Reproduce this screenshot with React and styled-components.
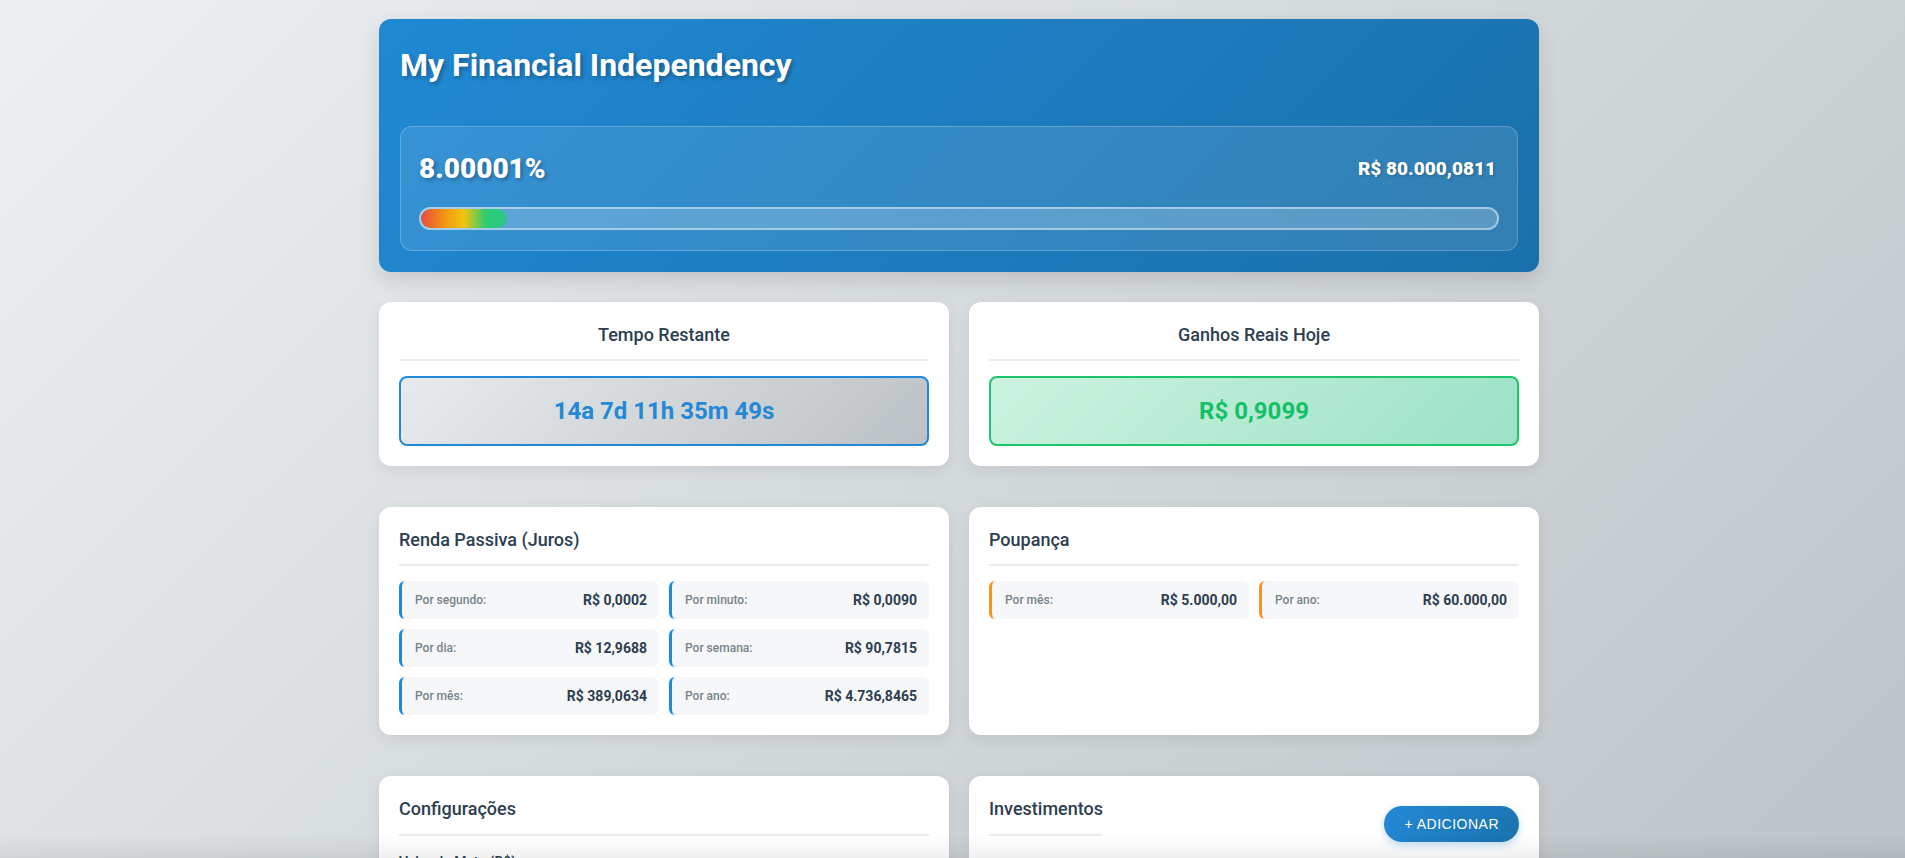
import React from "react";
import styled, { createGlobalStyle } from "styled-components";

const GlobalStyle = createGlobalStyle`
  * {
    box-sizing: border-box;
  }
  body {
    margin: 0;
    font-family: Roboto, "Liberation Sans", sans-serif;
    line-height: 1.6;
    color: #2c3e50;
    min-height: 100vh;
    background: linear-gradient(135deg, #ecf0f1 0%, #bdc3c7 100%) fixed;
  }
`;

const Page = styled.div`
  padding: 19px 0 40px 13px;
`;

const Container = styled.div`
  max-width: 1160px;
  margin: 0 auto;
`;

const Header = styled.header`
  background: linear-gradient(135deg, #2089d4 0%, #1a70aa 100%);
  border-radius: 12px;
  padding: 21px;
  color: #fff;
  box-shadow: 0 8px 20px rgba(0, 0, 0, 0.12);
  margin-bottom: 30px;
`;

const Title = styled.h1`
  margin: 6px 0 42px;
  font-size: 32px;
  font-weight: 700;
  line-height: 1.2;
  text-shadow: 2px 2px 4px rgba(0, 0, 0, 0.3);
`;

const ProgressPanel = styled.div`
  background: rgba(255, 255, 255, 0.1);
  border: 1px solid rgba(255, 255, 255, 0.22);
  border-radius: 12px;
  padding: 26px 18px 20px 18px;
`;

const ProgressRow = styled.div`
  display: flex;
  justify-content: space-between;
  align-items: center;
  margin-bottom: 21px;
`;

const Percent = styled.span`
  font-size: 28px;
  font-weight: 900;
  line-height: 1.15;
  text-shadow: 2px 2px 4px rgba(0, 0, 0, 0.3);
`;

const Amount = styled.span`
  font-size: 19px;
  font-weight: 900;
  line-height: 1.2;
  margin-right: 3px;
  text-shadow: 1px 1px 3px rgba(0, 0, 0, 0.25);
`;

const Track = styled.div`
  height: 23px;
  border: 2px solid rgba(255, 255, 255, 0.45);
  border-radius: 12px;
  background: rgba(255, 255, 255, 0.2);
  overflow: hidden;
`;

const Fill = styled.div`
  height: 100%;
  border-radius: 10px;
  background: linear-gradient(90deg, #e74c3c 0%, #f39c12 30%, #f1c40f 50%, #2ecc71 75%, #2ac78a 100%);
`;

const Grid = styled.div`
  display: grid;
  grid-template-columns: 1fr 1fr;
  gap: 20px;
  margin-bottom: 41px;
`;

const Card = styled.section`
  background: #fff;
  border-radius: 12px;
  padding: 20px;
  box-shadow: 0 4px 14px rgba(0, 0, 0, 0.08);
`;

const CardTitle = styled.h2`
  margin: 0 0 15px;
  font-size: 18px;
  font-weight: 500;
  line-height: 1.4;
  color: #2c3e50;
  text-align: ${(p) => (p.$center ? "center" : "left")};
  padding-bottom: 12px;
  border-bottom: 2px solid #e8ecee;
  ${(p) => p.$inline && "display: inline-block;"}
`;

const Highlight = styled.div`
  border-radius: 8px;
  padding: 14px;
  text-align: center;
  font-size: 24px;
  font-weight: 700;
  line-height: 1.6;
  border: 2px solid ${(p) => (p.$variant === "green" ? "#1cc56b" : "#2389d6")};
  color: ${(p) => (p.$variant === "green" ? "#14c066" : "#2389d6")};
  background: ${(p) =>
    p.$variant === "green"
      ? "linear-gradient(135deg, #cdf2e0 0%, #9be2c6 100%)"
      : "linear-gradient(135deg, #e7ebed 0%, #bcc1c5 100%)"};
`;

const StatGrid = styled.div`
  display: grid;
  grid-template-columns: 1fr 1fr;
  gap: 10px;
`;

const StatItem = styled.div`
  display: flex;
  justify-content: space-between;
  align-items: center;
  height: 38px;
  padding: 0 12px 0 13px;
  background: #f5f7f9;
  border-radius: 6px;
  border-left: 3px solid ${(p) => p.$accent};
`;

const StatLabel = styled.span`
  font-size: 12px;
  font-weight: 500;
  color: #75848a;
`;

const StatValue = styled.span`
  font-size: 14px;
  font-weight: 700;
  color: #2c3e50;
`;

const FieldLabel = styled.label`
  display: block;
  font-size: 14px;
  font-weight: 500;
  color: #2c3e50;
  margin-bottom: 6px;
`;

const Input = styled.input`
  width: 100%;
  padding: 10px 12px;
  border: 2px solid #e8ecee;
  border-radius: 8px;
  font-size: 14px;
  font-family: inherit;
  margin-bottom: 14px;
`;

const CardHeader = styled.div`
  display: flex;
  justify-content: space-between;
  align-items: flex-start;
`;

const AddButton = styled.button`
  margin-top: 10px;
  height: 36px;
  padding: 0 20px;
  border: none;
  border-radius: 18px;
  background: linear-gradient(135deg, #2389d6 0%, #1a72ad 100%);
  color: #fff;
  font-family: "Liberation Sans", Arial, sans-serif;
  font-size: 14px;
  font-weight: 500;
  letter-spacing: 0.5px;
  text-transform: uppercase;
  box-shadow: 0 3px 8px rgba(35, 137, 214, 0.3);
  cursor: pointer;
`;

const EmptyText = styled.p`
  margin: 10px 0 0;
  font-size: 14px;
  color: #7f8c8d;
  text-align: center;
`;

const BottomFade = styled.div`
  position: fixed;
  left: 0;
  right: 0;
  bottom: 0;
  height: 22px;
  pointer-events: none;
  background: linear-gradient(to bottom, rgba(0, 0, 0, 0), rgba(0, 0, 0, 0.06));
`;

const juros = [
  ["Por segundo:", "R$ 0,0002"],
  ["Por minuto:", "R$ 0,0090"],
  ["Por dia:", "R$ 12,9688"],
  ["Por semana:", "R$ 90,7815"],
  ["Por mês:", "R$ 389,0634"],
  ["Por ano:", "R$ 4.736,8465"],
];

const poupanca = [
  ["Por mês:", "R$ 5.000,00"],
  ["Por ano:", "R$ 60.000,00"],
];

export default function App() {
  const progress = 8.00001;

  return (
    <>
      <GlobalStyle />
      <Page>
        <Container>
          <Header>
            <Title>My Financial Independency</Title>
            <ProgressPanel>
              <ProgressRow>
                <Percent>8.00001%</Percent>
                <Amount>R$ 80.000,0811</Amount>
              </ProgressRow>
              <Track>
                <Fill style={{ width: `${progress}%` }} />
              </Track>
            </ProgressPanel>
          </Header>

          <Grid>
            <Card>
              <CardTitle $center>Tempo Restante</CardTitle>
              <Highlight>14a 7d 11h 35m 49s</Highlight>
            </Card>
            <Card>
              <CardTitle $center>Ganhos Reais Hoje</CardTitle>
              <Highlight $variant="green">R$ 0,9099</Highlight>
            </Card>
          </Grid>

          <Grid>
            <Card>
              <CardTitle>Renda Passiva (Juros)</CardTitle>
              <StatGrid>
                {juros.map(([label, value]) => (
                  <StatItem key={label} $accent="#2389d6">
                    <StatLabel>{label}</StatLabel>
                    <StatValue>{value}</StatValue>
                  </StatItem>
                ))}
              </StatGrid>
            </Card>
            <Card>
              <CardTitle>Poupança</CardTitle>
              <StatGrid>
                {poupanca.map(([label, value]) => (
                  <StatItem key={label} $accent="#f7931e">
                    <StatLabel>{label}</StatLabel>
                    <StatValue>{value}</StatValue>
                  </StatItem>
                ))}
              </StatGrid>
            </Card>
          </Grid>

          <Grid>
            <Card>
              <CardTitle>Configurações</CardTitle>
              <FieldLabel>Valor da Meta (R$)</FieldLabel>
              <Input defaultValue="1000000" />
              <FieldLabel>Valor Atual (R$)</FieldLabel>
              <Input defaultValue="80000" />
            </Card>
            <Card>
              <CardHeader>
                <CardTitle $inline>Investimentos</CardTitle>
                <AddButton>+ Adicionar</AddButton>
              </CardHeader>
              <EmptyText>Nenhum investimento cadastrado.</EmptyText>
            </Card>
          </Grid>
        </Container>
      </Page>
      <BottomFade />
    </>
  );
}
